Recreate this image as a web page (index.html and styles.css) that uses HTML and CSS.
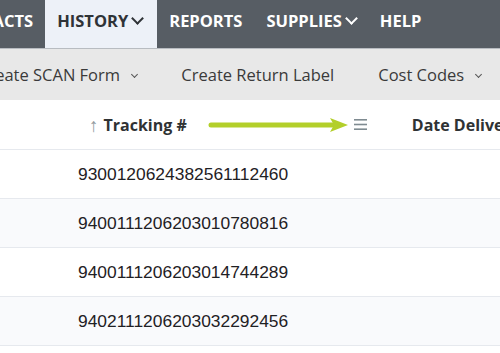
FILE: index.html
```html
<!DOCTYPE html>
<html lang="en">
<head>
    <meta charset="UTF-8">
    <meta name="viewport" content="width=device-width, initial-scale=1.0">
    <title>Shipment History</title>
    <link rel="stylesheet" href="styles.css">
</head>
<body>
    <nav class="topnav">
        <a class="nav-item nav-first">CONTACTS</a>
        <a class="nav-item active">HISTORY <span class="chev"></span></a>
        <a class="nav-item">REPORTS</a>
        <a class="nav-item">SUPPLIES <span class="chev"></span></a>
        <a class="nav-item">HELP</a>
    </nav>

    <div class="toolbar">
        <span class="tool tool-first">Create SCAN Form <span class="tchev"></span></span>
        <span class="tool">Create Return Label</span>
        <span class="tool">Cost Codes <span class="tchev"></span></span>
    </div>

    <div class="grid">
        <div class="grid-head">
            <span class="sort">&#8593;</span>
            <span class="col-title">Tracking #</span>
            <svg class="pointer" width="142" height="14" viewBox="0 0 142 14">
                <line x1="3" y1="7" x2="126" y2="7" stroke="#b3cf2a" stroke-width="5" stroke-linecap="round"/>
                <polygon points="122,0 140,7 122,14 126,7" fill="#b3cf2a"/>
            </svg>
            <svg class="menu" width="13" height="11" viewBox="0 0 13 11">
                <rect x="0" y="0" width="13" height="1.6" fill="#7f8b91"/>
                <rect x="0" y="4.7" width="13" height="1.6" fill="#7f8b91"/>
                <rect x="0" y="9.4" width="13" height="1.6" fill="#7f8b91"/>
            </svg>
            <span class="col-title col-date">Date Delivered</span>
        </div>
        <div class="row">9300120624382561112460</div>
        <div class="row alt">9400111206203010780816</div>
        <div class="row">9400111206203014744289</div>
        <div class="row alt">9402111206203032292456</div>
    </div>
</body>
</html>
```

FILE: styles.css
```css
body {
    margin: 0;
    background-color: #fff;
    font-family: "Open Sans", Arial, sans-serif;
    overflow: hidden;
}
.topnav {
    display: flex;
    height: 48px;
    background-color: #575d64;
    border-bottom: 1px solid #b8bcc1;
    white-space: nowrap;
}
.nav-item {
    display: flex;
    align-items: center;
    padding: 0 12px 7px 12px;
    color: #fff;
    font-weight: 700;
    font-size: 16.5px;
}
.nav-first {
    margin-left: -66px;
}
.nav-item.active {
    background-color: #edf1f8;
    color: #2f3337;
    padding-right: 15px;
}
.chev {
    display: inline-block;
    width: 7px;
    height: 7px;
    border-right: 2.5px solid currentColor;
    border-bottom: 2.5px solid currentColor;
    transform: rotate(45deg);
    margin: -5px 0 0 5px;
}
.toolbar {
    display: flex;
    align-items: center;
    height: 51px;
    background-color: #e8e8e8;
    white-space: nowrap;
}
.tool {
    padding: 0 22px;
    color: #3a3a3a;
    font-size: 16.5px;
}
.tool-first {
    margin-left: -44px;
}
.tchev {
    display: inline-block;
    width: 4px;
    height: 4px;
    border-right: 1.5px solid #555;
    border-bottom: 1.5px solid #555;
    transform: rotate(45deg);
    margin: 0 0 4px 8px;
}
.grid-head {
    display: flex;
    align-items: center;
    height: 49px;
    padding-left: 89px;
    border-bottom: 1px solid #e6e9ee;
    white-space: nowrap;
}
.grid-head > * {
    flex-shrink: 0;
}
.sort {
    color: #939c9e;
    font-size: 19px;
    margin-right: 5px;
}
.col-title {
    color: #2f3234;
    font-weight: 700;
    font-size: 16px;
}
.pointer {
    margin-left: 21px;
}
.menu {
    margin-left: 4px;
}
.col-date {
    margin-left: 45px;
}
.row {
    height: 48px;
    line-height: 48px;
    padding-left: 78px;
    border-bottom: 1px solid #e6e9ee;
    font-family: "Liberation Sans", Arial, sans-serif;
    font-size: 17.4px;
    color: #1f2124;
}
.row.alt {
    background-color: #f9fafc;
}
```
